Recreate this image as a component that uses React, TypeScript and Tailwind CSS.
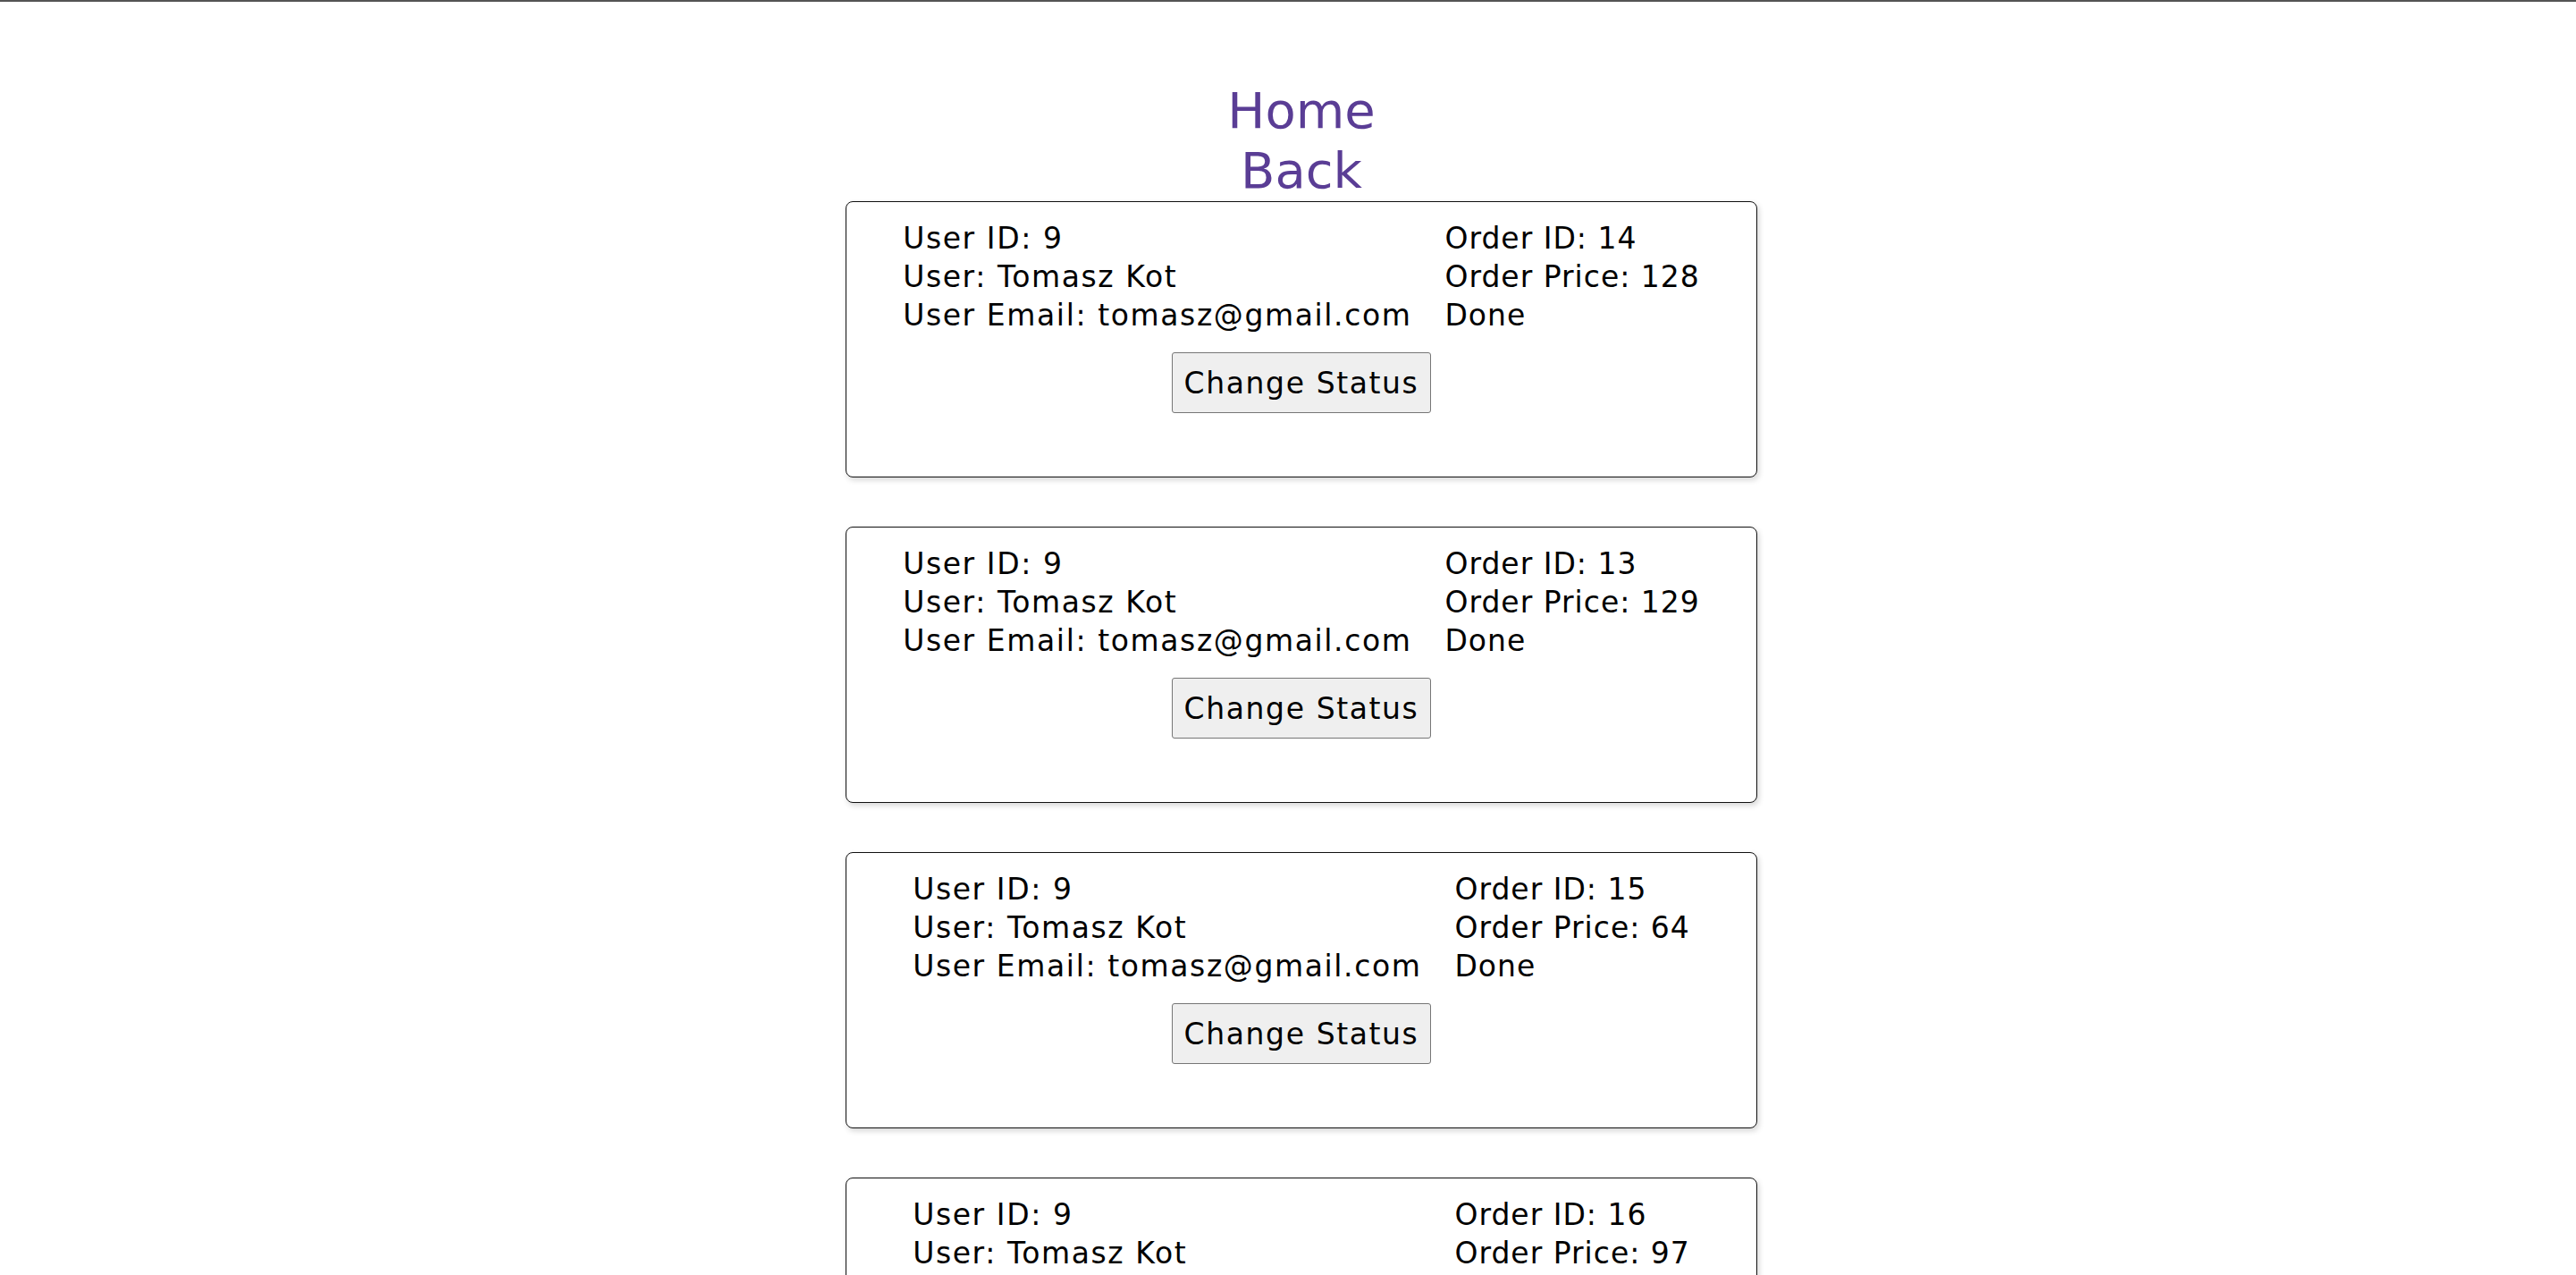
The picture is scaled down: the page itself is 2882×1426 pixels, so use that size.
const orders = [
  { userId: 9, user: "Tomasz Kot", email: "tomasz@gmail.com", orderId: 14, price: 128, status: "Done" },
  { userId: 9, user: "Tomasz Kot", email: "tomasz@gmail.com", orderId: 13, price: 129, status: "Done" },
  { userId: 9, user: "Tomasz Kot", email: "tomasz@gmail.com", orderId: 15, price: 64, status: "Done" },
  { userId: 9, user: "Tomasz Kot", email: "tomasz@gmail.com", orderId: 16, price: 97, status: "Done" },
];

type Order = (typeof orders)[number];

function OrderCard({ order }: { order: Order }) {
  return (
    <div className="box-border h-[309px] w-[1020px] shrink-0 rounded-lg border border-[#111111] bg-white pt-[19px] shadow-[2px_3px_6px_rgba(0,0,0,0.16)]">
      <div className="flex justify-center gap-[37px]">
        <div>
          <p>User ID: {order.userId}</p>
          <p>User: {order.user}</p>
          <p>User Email: {order.email}</p>
        </div>
        <div className="tracking-[1px]">
          <p>Order ID: {order.orderId}</p>
          <p>Order Price: {order.price}</p>
          <p>{order.status}</p>
        </div>
      </div>
      <div className="mt-[20px] flex justify-center">
        <button
          type="button"
          className="box-border h-[68px] w-[290px] rounded-[3px] border border-[#767676] bg-[#efefef] text-[33px] tracking-[1.6px] text-black"
        >
          Change Status
        </button>
      </div>
    </div>
  );
}

export default function App() {
  return (
    <div className="min-h-screen border-t-2 border-[#545454] bg-white pl-[30px] font-['DejaVu_Sans',sans-serif] text-[33px] leading-[43px] tracking-[1.6px] text-black">
      <nav className="flex flex-col items-center pt-[88px] text-[56px] leading-[67px] tracking-normal">
        <a href="#" className="text-[#5a3d95]">Home</a>
        <a href="#" className="text-[#5a3d95]">Back</a>
      </nav>
      <div className="flex flex-col items-center gap-[55px] pt-[1px] pb-[40px]">
        {orders.map((order) => (
          <OrderCard key={order.orderId} order={order} />
        ))}
      </div>
    </div>
  );
}
